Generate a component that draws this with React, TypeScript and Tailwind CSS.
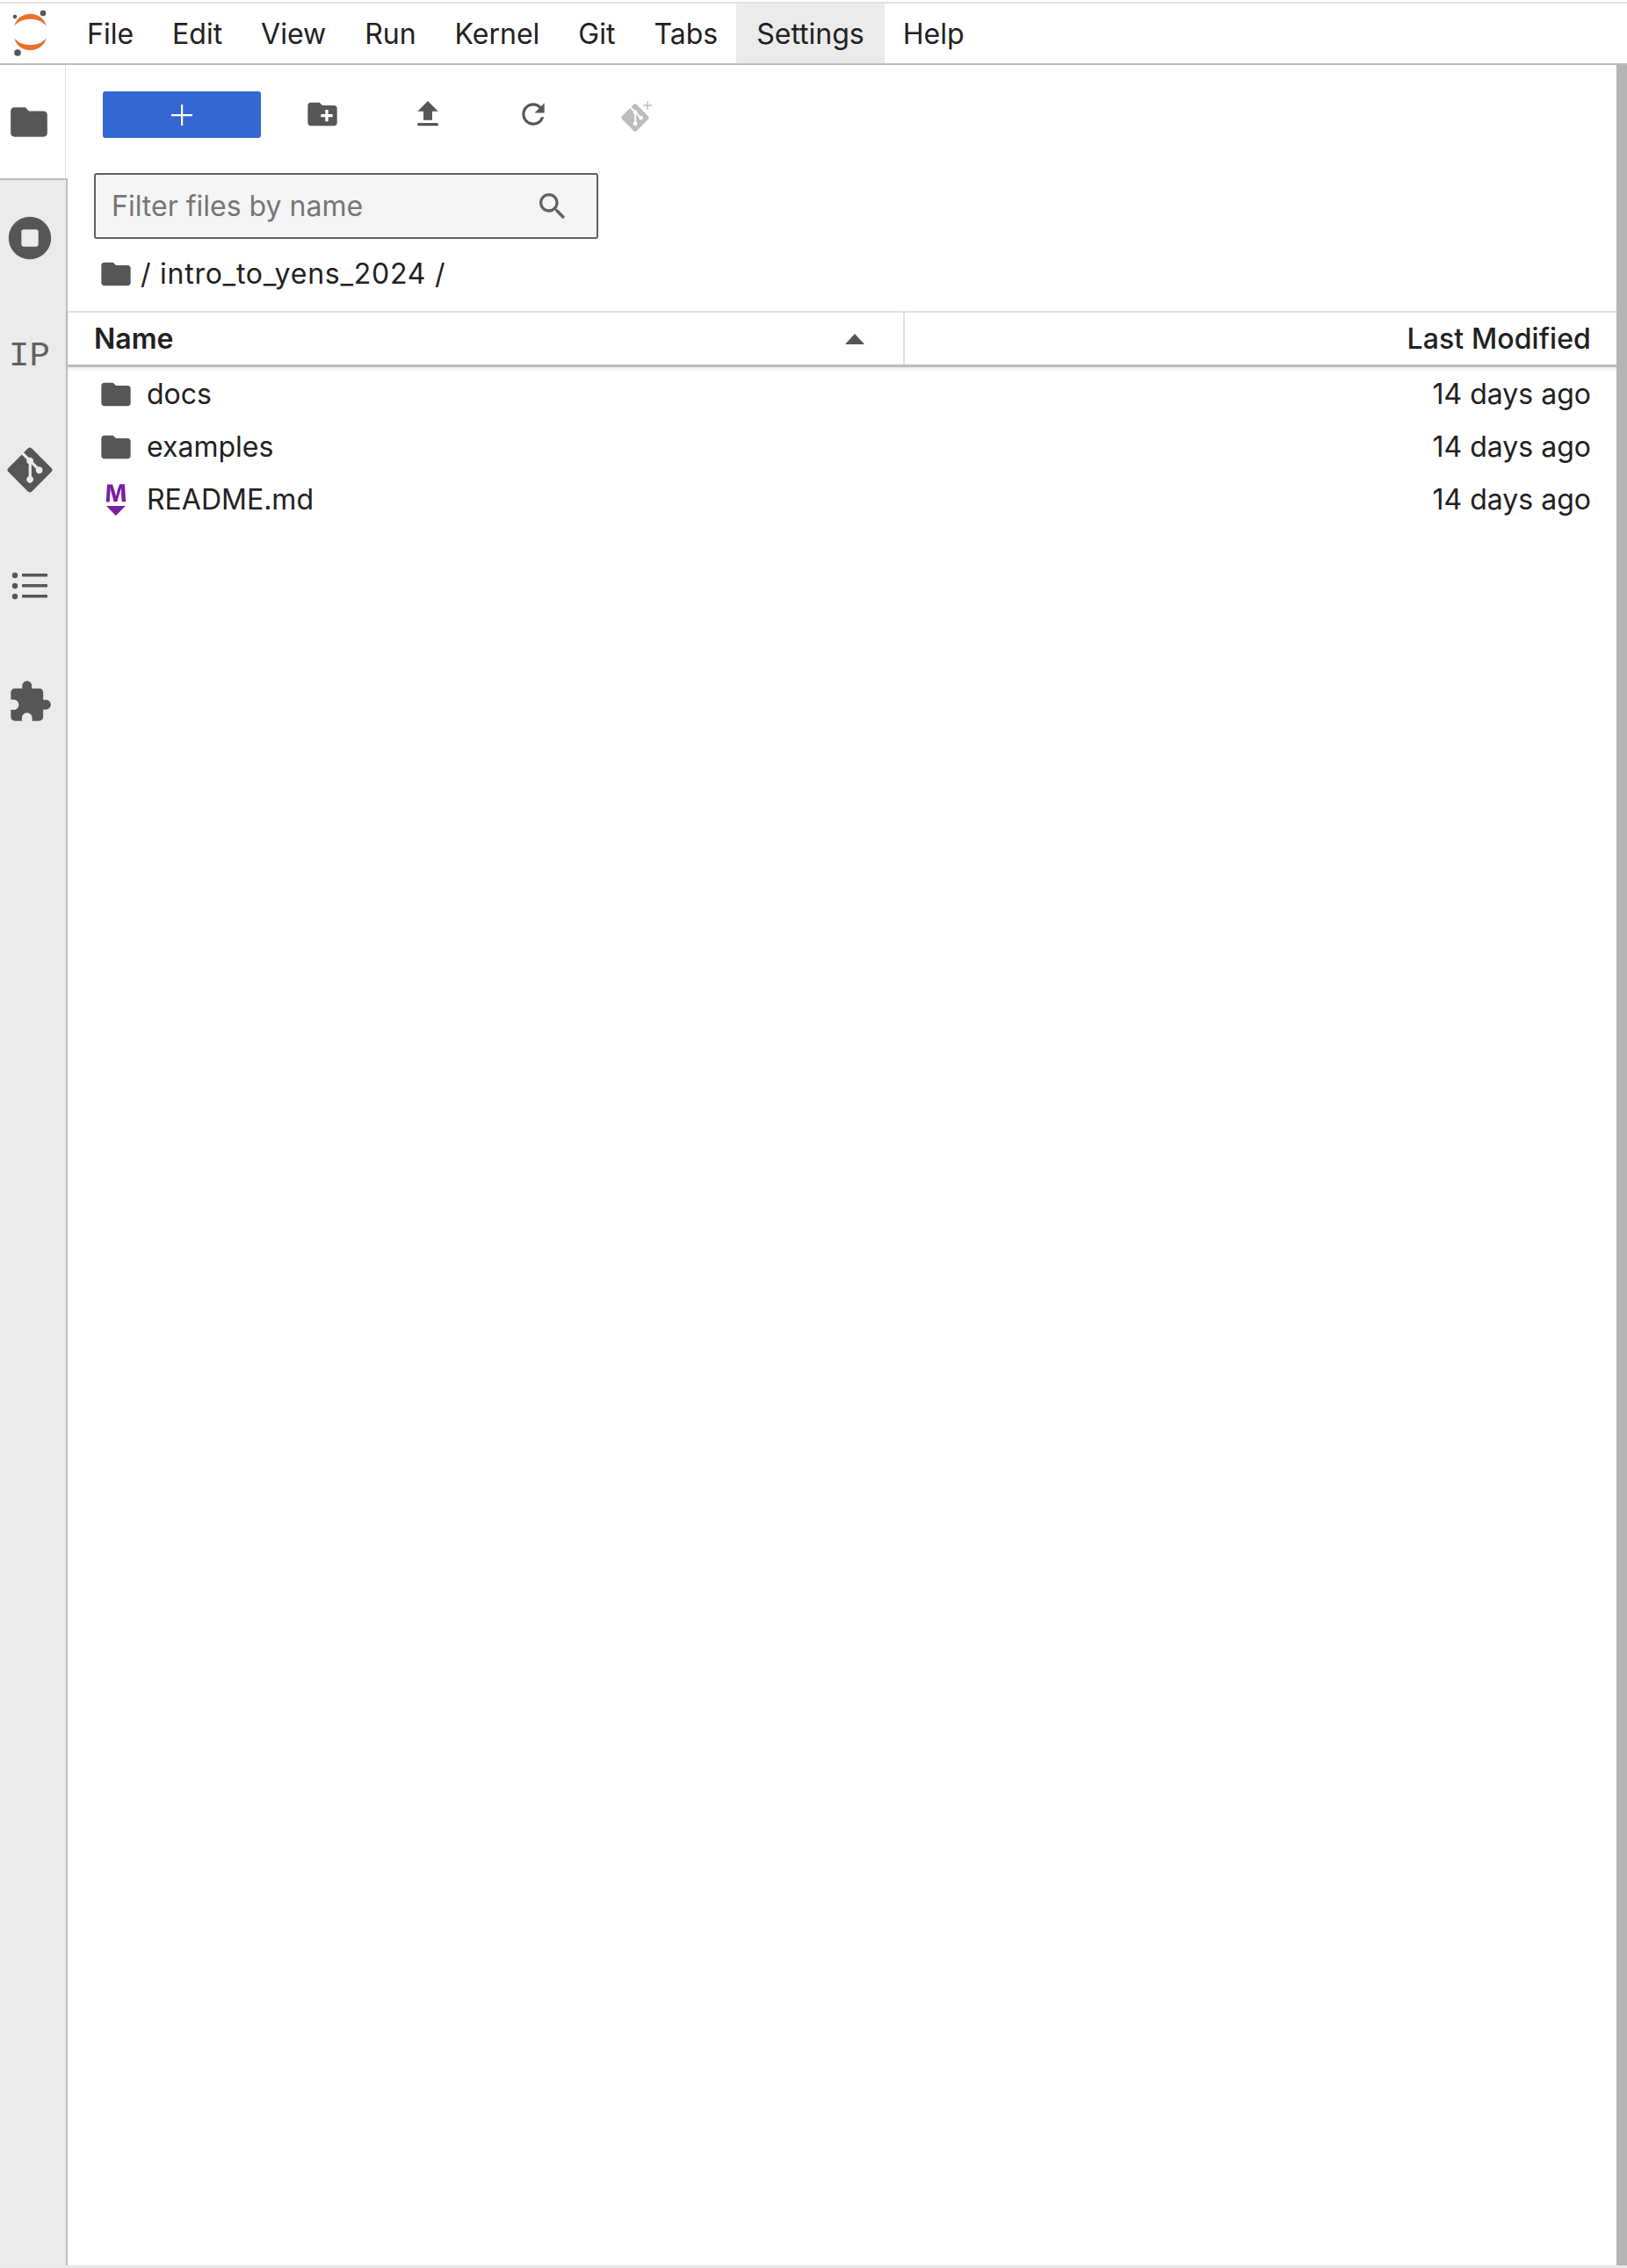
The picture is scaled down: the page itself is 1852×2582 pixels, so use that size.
import React from "react";
import { FaGitAlt } from "react-icons/fa";

const Icon = ({ d, size = 40, color = "#565656", className = "" }: { d: string; size?: number; color?: string; className?: string }) => (
  <svg width={size} height={size} viewBox="0 0 24 24" fill={color} className={className}>
    <path d={d} />
  </svg>
);

const folder = "M10 4H4c-1.1 0-1.99.9-1.99 2L2 18c0 1.1.9 2 2 2h16c1.1 0 2-.9 2-2V8c0-1.1-.9-2-2-2h-8l-2-2z";
const newFolder = "M20 6h-8l-2-2H4c-1.11 0-1.99.89-1.99 2L2 18c0 1.11.89 2 2 2h16c1.11 0 2-.89 2-2V8c0-1.11-.89-2-2-2zm-1 8h-3v3h-2v-3h-3v-2h3V9h2v3h3v2z";
const upload = "M9 16h6v-6h4l-7-7-7 7h4zm-4 2h14v2H5z";
const refresh = "M17.65 6.35C16.2 4.9 14.21 4 12 4c-4.42 0-7.99 3.58-7.99 8s3.57 8 7.99 8c3.73 0 6.84-2.55 7.73-6h-2.08c-.82 2.33-3.04 4-5.65 4-3.31 0-6-2.69-6-6s2.69-6 6-6c1.66 0 3.14.69 4.22 1.78L13 11h7V4l-2.35 2.35z";
const search = "M15.5 14h-.79l-.28-.27C15.41 12.59 16 11.11 16 9.5 16 5.91 13.09 3 9.5 3S3 5.91 3 9.5 5.91 16 9.5 16c1.61 0 3.09-.59 4.23-1.57l.27.28v.79l5 4.99L20.49 19l-4.99-5zm-6 0C7.01 14 5 11.99 5 9.5S7.01 5 9.5 5 14 7.01 14 9.5 11.99 14 9.5 14z";
const stop = "M12 2C6.48 2 2 6.48 2 12s4.48 10 10 10 10-4.48 10-10S17.52 2 12 2zm4 13c0 .55-.45 1-1 1H9c-.55 0-1-.45-1-1V9c0-.55.45-1 1-1h6c.55 0 1 .45 1 1v6z";
const extension = "M20.5 11H19V7c0-1.1-.9-2-2-2h-4V3.5C13 2.12 11.88 1 10.5 1S8 2.12 8 3.5V5H4c-1.1 0-1.99.9-1.99 2v3.8H3.5c1.49 0 2.7 1.21 2.7 2.7s-1.21 2.7-2.7 2.7H2V20c0 1.1.9 2 2 2h3.8v-1.5c0-1.49 1.21-2.7 2.7-2.7 1.49 0 2.7 1.21 2.7 2.7V22H17c1.1 0 2-.9 2-2v-4h1.5c1.38 0 2.5-1.12 2.5-2.5S21.88 11 20.5 11z";

const JupyterLogo = () => (
  <svg width="44" height="54" viewBox="0 0 44 54">
    <path d="M4 19 C9 0 36 0 41 19 C33 8 12 8 4 19 Z" fill="#E67329" />
    <path d="M4 32 C9 51 36 51 41 32 C33 43 12 43 4 32 Z" fill="#E67329" />
    <circle cx="37" cy="4" r="3.3" fill="#565656" />
    <circle cx="5" cy="8" r="2.3" fill="#565656" />
    <circle cx="8" cy="49" r="3.8" fill="#565656" />
  </svg>
);

const MarkdownIcon = () => (
  <svg width="42" height="42" viewBox="0 0 22 22" fill="#7B1FA2">
    <path d="M5 14.9h12l-6.1 6zm9.4-6.8c0-1.3-.1-2.9-.1-4.5-.4 1.4-.9 3-1.3 4.3l-1.3 4.3h-2L8.5 7.9c-.4-1.3-.7-2.9-1-4.3-.1 1.6-.1 3.2-.2 4.6L7 12.4H4.8l.7-11h3.3L10 5c.4 1.2.7 2.7 1 3.9.3-1.2.7-2.6 1-3.9l1.2-3.7h3.3l.6 11h-2.4l-.3-4.2z" />
  </svg>
);

const ListIcon = () => (
  <svg width="42" height="34" viewBox="0 0 42 34" fill="#565656">
    <circle cx="4" cy="5" r="3.2" />
    <circle cx="4" cy="17" r="3.2" />
    <circle cx="4" cy="29" r="3.2" />
    <rect x="12" y="3" width="29" height="3.6" rx="0.8" />
    <rect x="12" y="15" width="29" height="3.6" rx="0.8" />
    <rect x="12" y="27" width="29" height="3.6" rx="0.8" />
  </svg>
);

const menu = ["File", "Edit", "View", "Run", "Kernel", "Git", "Tabs", "Settings", "Help"];
const rows = [
  { name: "docs", icon: "folder" },
  { name: "examples", icon: "folder" },
  { name: "README.md", icon: "md" },
];

export default function App() {
  return (
    <div className="w-[1852px] h-[2582px] flex flex-col bg-[#e9e9e9] text-[#212121] text-[32px] font-['Inter','Noto_Sans',sans-serif] overflow-hidden">
      <div className="h-[2px] bg-white" />
      <div className="h-[2px] bg-[#e0e0e0]" />
      <header className="h-[70px] bg-white border-b-[2px] border-[#bdbdbd] flex items-stretch">
        <div className="w-[77px] flex items-center pl-[12px] shrink-0">
          <JupyterLogo />
        </div>
        {menu.map((m) => (
          <div key={m} className={`flex items-center leading-none pt-[2px] ${m === "Settings" ? "bg-[#ebebeb] px-[23px] -mx-[1px]" : "px-[22px]"}`}>
            {m}
          </div>
        ))}
      </header>
      <div className="flex-1 flex min-h-0 mb-[3px]">
        <aside className="w-[77px] bg-[#ebebeb] border-r-[2px] border-[#bdbdbd] flex flex-col shrink-0">
          <div className="h-[131px] bg-white -mr-[2px] border-b-[2px] border-[#bdbdbd]">
            <div className="w-[75px] h-full border-r border-[#e0e0e0] flex items-center justify-center pr-[8px]">
              <Icon d={folder} size={50} />
            </div>
          </div>
          <div className="h-[132px] flex items-center justify-center pr-[8px]">
            <Icon d={stop} size={58} />
          </div>
          <div className="h-[132px] flex items-center justify-center pr-[8px] pt-[6px] text-[#616161] text-[39px] font-['Liberation_Mono',monospace] leading-none">
            IP
          </div>
          <div className="h-[132px] flex items-center justify-center pr-[8px]">
            <FaGitAlt size={58} color="#565656" />
          </div>
          <div className="h-[132px] flex items-center justify-center pr-[8px]">
            <ListIcon />
          </div>
          <div className="h-[132px] flex items-center justify-center pr-[8px]">
            <Icon d={extension} size={52} />
          </div>
        </aside>
        <main className="flex-1 bg-white flex flex-col min-w-0">
          <div className="h-[123px] flex items-start pt-[30px] pl-[40px] shrink-0">
            <div className="w-[180px] h-[53px] rounded-[3px] bg-[#3367d1] flex items-center justify-center">
              <svg width="26" height="26" viewBox="0 0 26 26" fill="#fff"><path d="M12 1h2.2v11H25v2.2H14.2V25H12V14.2H1V12h11z" /></svg>
            </div>
            <div className="w-[120px] h-[52px] ml-[10px] flex items-center justify-center"><Icon d={newFolder} size={40} /></div>
            <div className="w-[120px] h-[52px] flex items-center justify-center"><Icon d={upload} size={40} /></div>
            <div className="w-[120px] h-[52px] flex items-center justify-center"><Icon d={refresh} size={38} /></div>
            <div className="w-[120px] h-[52px] flex items-center justify-center relative">
              <FaGitAlt size={36} color="#bdbdbd" className="mt-[8px] mr-[8px]" />
              <svg width="10" height="10" viewBox="0 0 10 10" fill="#bdbdbd" className="absolute left-[65px] top-[11px]"><path d="M4.3 0h1.4v4.3H10v1.4H5.7V10H4.3V5.7H0V4.3h4.3z" /></svg>
            </div>
          </div>
          <div className="pl-[30px] shrink-0">
            <div className="w-[574px] h-[75px] bg-[#f5f5f5] border-2 border-[#616161] rounded-[3px] flex items-center justify-between pl-[18px] pr-[30px] text-[#757575]">
              <span>Filter files by name</span>
              <Icon d={search} size={40} color="#616161" />
            </div>
          </div>
          <div className="h-[82px] flex items-center pl-[35px] pb-[3px] gap-[8px] shrink-0">
            <Icon d={folder} size={40} />
            <span className="tracking-[0.75px]">/ intro_to_yens_2024 /</span>
          </div>
          <div className="h-[64px] border-t-[2px] border-[#e0e0e0] border-b-[3px] border-b-[#bdbdbd] flex items-center shrink-0 shadow-[0_2px_4px_rgba(0,0,0,0.1)]">
            <div className="w-[953px] h-full flex items-center justify-between pl-[30px] pr-[44px] pt-[1px] border-r-[2px] border-[#e0e0e0] font-semibold">
              <span>Name</span>
              <svg width="22" height="12" viewBox="0 0 22 12" fill="#565656"><path d="M11 0l11 12H0z" /></svg>
            </div>
            <div className="flex-1 text-right pr-[29px] pt-[1px] font-medium tracking-[0.1px]">Last Modified</div>
          </div>
          <div className="flex-1 flex flex-col pt-[1px]">
            {rows.map((r) => (
              <div key={r.name} className="h-[60px] flex items-center pl-[35px] pr-[29px] shrink-0">
                <div className="w-[40px] flex justify-center shrink-0">
                  {r.icon === "folder" ? <Icon d={folder} size={40} /> : <MarkdownIcon />}
                </div>
                <span className="ml-[15px] flex-1">{r.name}</span>
                <span>14 days ago</span>
              </div>
            ))}
          </div>
        </main>
        <div className="w-[12px] bg-[#b4b4b4] shrink-0" />
      </div>
    </div>
  );
}
